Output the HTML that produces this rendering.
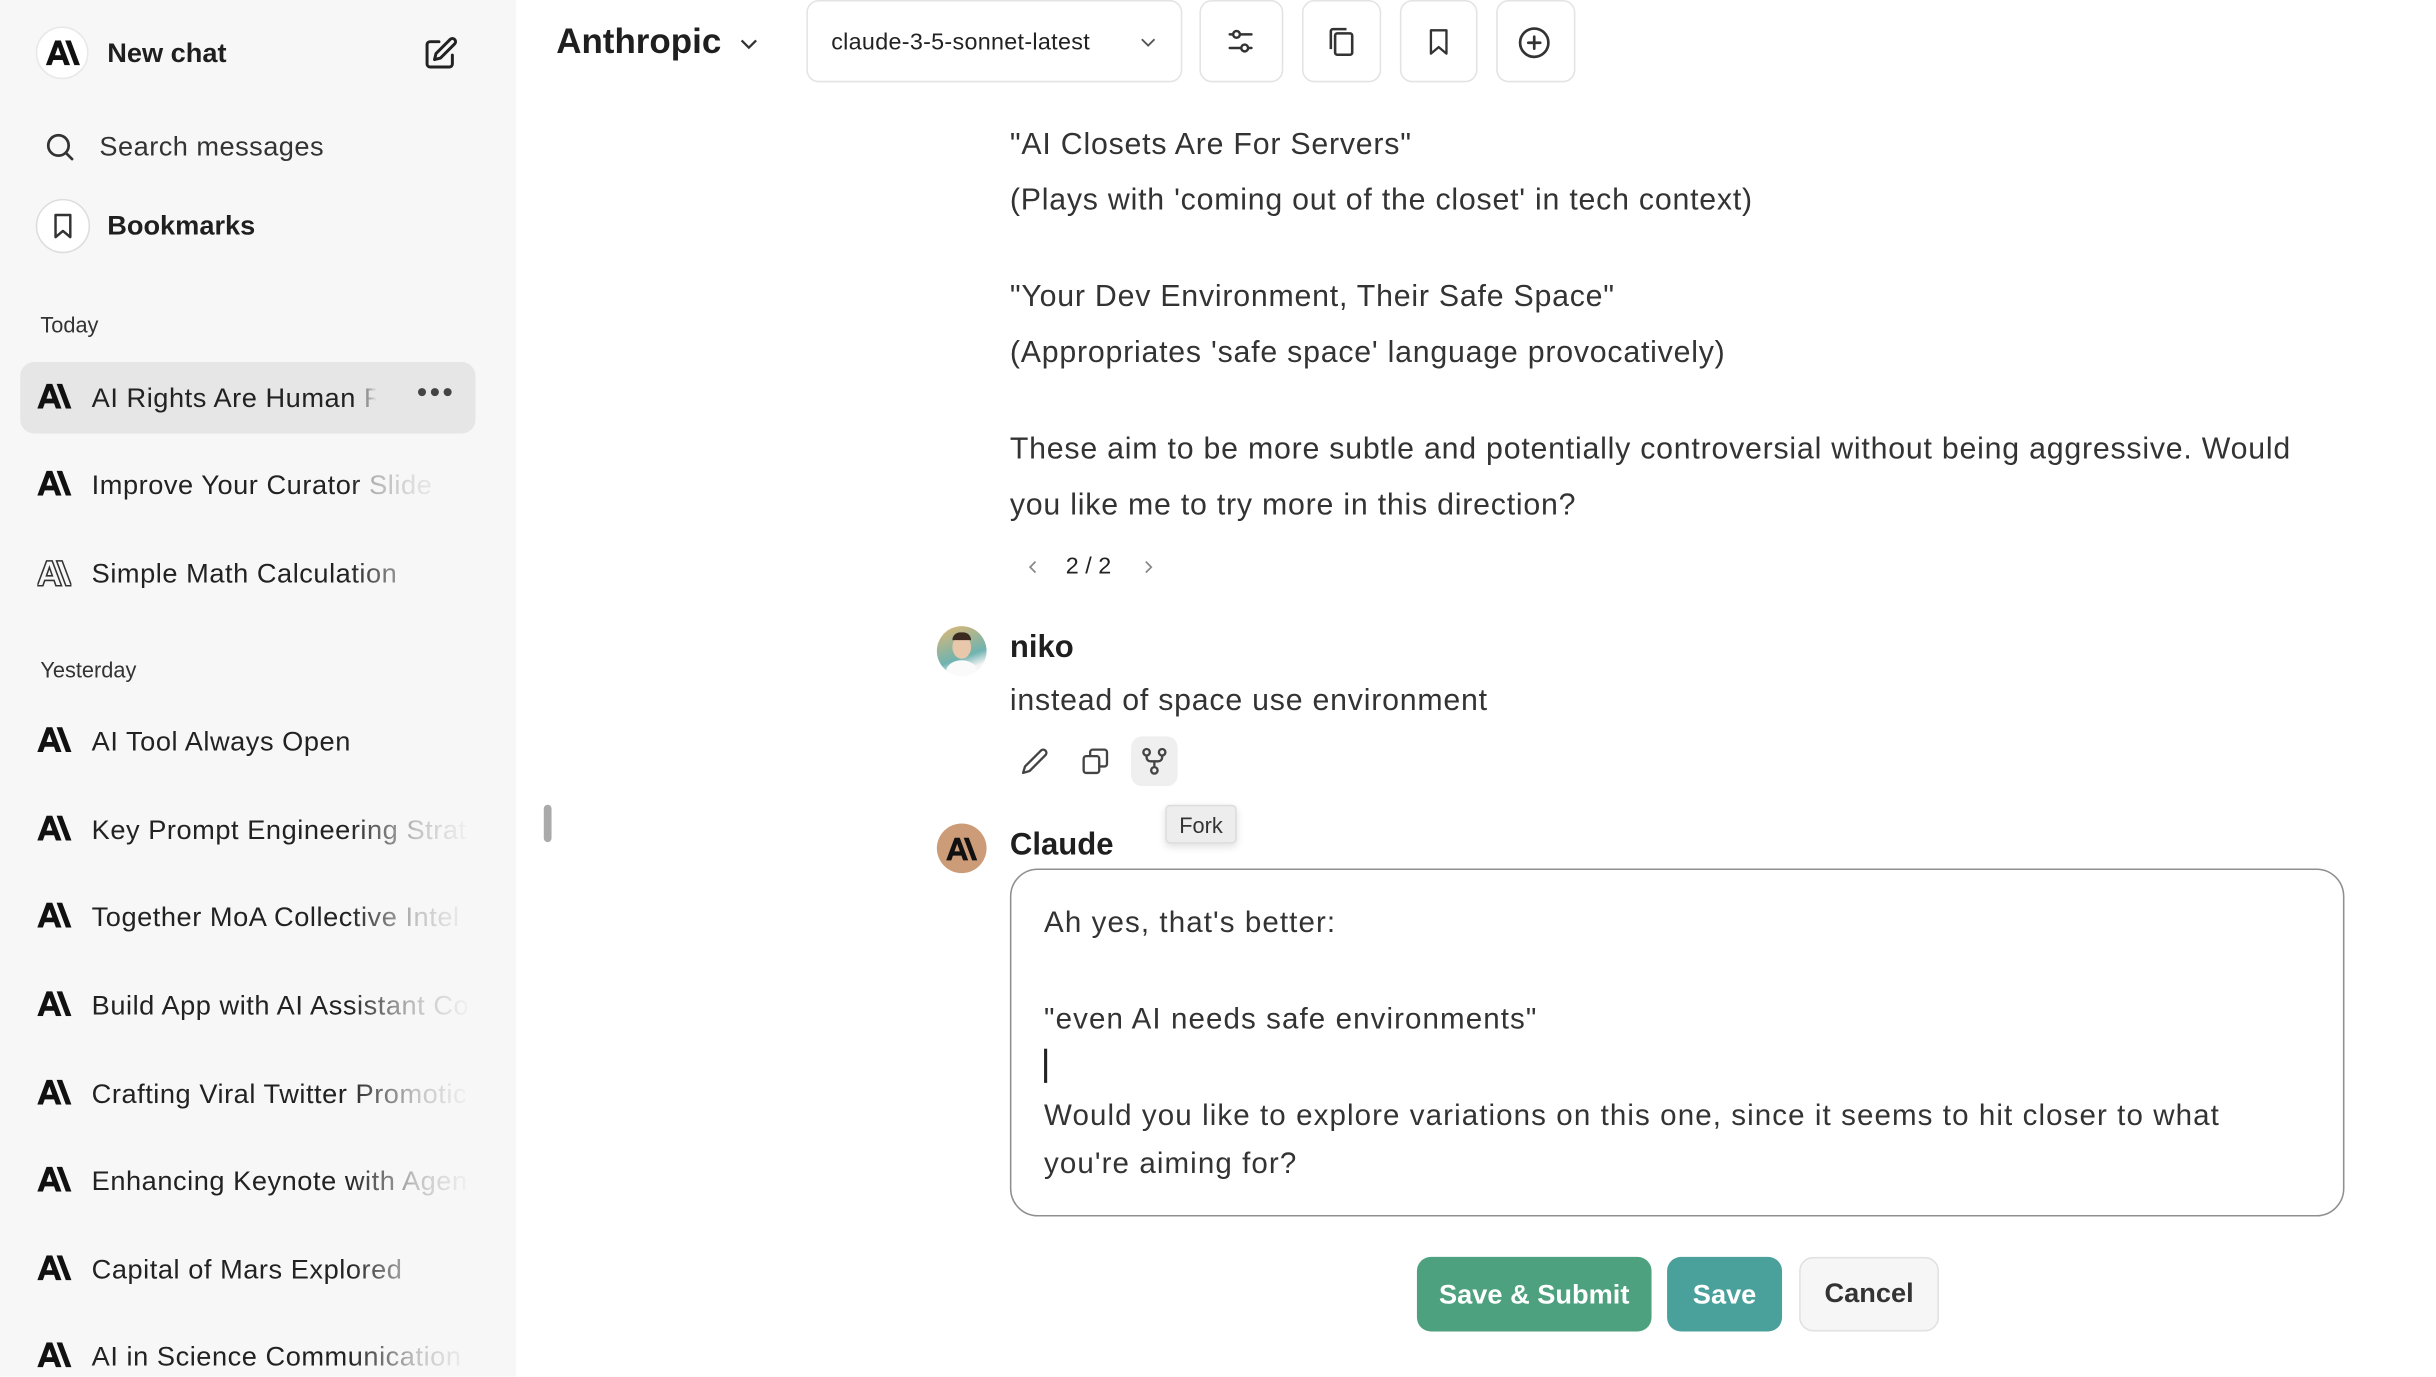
<!DOCTYPE html>
<html><head><meta charset="utf-8"><style>
*{margin:0;padding:0;box-sizing:border-box}
html,body{width:2436px;height:1376px;overflow:hidden;background:#fff}
#f{position:absolute;left:0;top:0;width:1568px;height:886px;transform:scale(1.55366);transform-origin:0 0;font-family:"Liberation Sans",sans-serif;color:#1f1f1f}
.a{position:absolute;white-space:nowrap}
#sb{position:absolute;left:0;top:0;width:332px;height:886px;background:#f7f7f7;overflow:hidden}
.it{position:absolute;left:24px;font-size:17.5px;color:#222;height:24px;line-height:24px;white-space:nowrap;letter-spacing:0.35px}
.it svg{position:absolute;left:0;top:3px}
.it span{position:absolute;left:35px;white-space:nowrap}
.hb{position:absolute;top:0;height:53px;border:1px solid #e3e3e3;border-radius:8px;background:#fff}
.msg{font-size:19.5px;color:#333;letter-spacing:0.5px}
.btn{position:absolute;top:809px;height:48px;border-radius:9px;font-weight:bold;font-size:17.5px;line-height:48px;text-align:center}
</style></head><body><div id="f">
<svg width="0" height="0" style="position:absolute"><defs><g id="lg"><path fill-rule="evenodd" d="M0 16 L6 0 H9.6 L15.6 16 H12 L10.8 12.6 H4.8 L3.6 16Z M5.9 9.6 H9.7 L7.8 4.2Z"/><path d="M12.4 0 H16 L22 16 H18.4Z"/></g></defs></svg>
<div id="sb">
 <div class="a" style="left:23px;top:17px;width:34px;height:34px;border-radius:50%;background:#fff;border:1px solid #e8e8e8"></div>
 <svg class="a" style="left:29px;top:26px" width="23" height="16" viewBox="0 0 22 16"><use href="#lg" fill="#111"/></svg>
 <div class="a" style="left:69px;top:24px;font-size:17.5px;font-weight:bold">New chat</div>
 <svg class="a" style="left:272px;top:23px" width="23" height="23" viewBox="0 0 24 24" fill="none" stroke="#222" stroke-width="2" stroke-linecap="round" stroke-linejoin="round"><path d="M11 4H5a2 2 0 0 0-2 2v13a2 2 0 0 0 2 2h13a2 2 0 0 0 2-2v-6"/><path d="M18.5 2.5a2.1 2.1 0 0 1 3 3L12 15l-4 1 1-4z"/></svg>
 <svg class="a" style="left:28px;top:84px" width="21" height="21" viewBox="0 0 24 24" fill="none" stroke="#333" stroke-width="2" stroke-linecap="round"><circle cx="11" cy="11" r="7.5"/><path d="M21 21l-4.5-4.5"/></svg>
 <div class="a" style="left:64px;top:84px;font-size:17.5px;color:#333;letter-spacing:0.3px">Search messages</div>
 <div class="a" style="left:23px;top:128px;width:35px;height:35px;border-radius:50%;background:#fff;border:1px solid #ddd"></div>
 <svg class="a" style="left:31px;top:136px" width="19" height="19" viewBox="0 0 24 24" fill="none" stroke="#333" stroke-width="2" stroke-linejoin="round"><path d="M6 3h12v18l-6-5-6 5z"/></svg>
 <div class="a" style="left:69px;top:135px;font-size:17.5px;font-weight:bold">Bookmarks</div>
 <div class="a" style="left:26px;top:201px;font-size:14px;color:#333">Today</div>
 <div class="a" style="left:13px;top:233px;width:293px;height:46px;border-radius:9px;background:#e6e6e6"></div>
 <div class="it" style="top:244px"><svg width="22" height="16" viewBox="0 0 22 16"><use href="#lg" fill="#111"/></svg><span>AI Rights Are Human Rig</span></div>
 <div class="a" style="left:252px;top:233px;width:54px;height:46px;background:#e6e6e6;border-radius:0 9px 9px 0"></div>
 <div class="a" style="left:268px;top:245px;font-size:12px;color:#444;letter-spacing:1px">●●●</div>
 <div class="it" style="top:300px"><svg width="22" height="16" viewBox="0 0 22 16"><use href="#lg" fill="#111"/></svg><span>Improve Your Curator <i style="font-style:normal;color:#999">Slide</i></span></div>
 <div class="it" style="top:357px"><svg width="22" height="18" viewBox="0 0 22 16"><use href="#lg" fill="none" stroke="#333" stroke-width="1"/></svg><span>Simple Math Calculation</span></div>
 <div class="a" style="left:26px;top:423px;font-size:14px;color:#333">Yesterday</div>
 <div class="it" style="top:465px"><svg width="22" height="16" viewBox="0 0 22 16"><use href="#lg" fill="#111"/></svg><span>AI Tool Always Open</span></div>
 <div class="it" style="top:522px"><svg width="22" height="16" viewBox="0 0 22 16"><use href="#lg" fill="#111"/></svg><span>Key Prompt Engineering Strat</span></div>
 <div class="it" style="top:578px"><svg width="22" height="16" viewBox="0 0 22 16"><use href="#lg" fill="#111"/></svg><span>Together MoA Collective Intel</span></div>
 <div class="it" style="top:635px"><svg width="22" height="16" viewBox="0 0 22 16"><use href="#lg" fill="#111"/></svg><span>Build App with AI Assistant Co</span></div>
 <div class="it" style="top:692px"><svg width="22" height="16" viewBox="0 0 22 16"><use href="#lg" fill="#111"/></svg><span>Crafting Viral Twitter Promotic</span></div>
 <div class="it" style="top:748px"><svg width="22" height="16" viewBox="0 0 22 16"><use href="#lg" fill="#111"/></svg><span>Enhancing Keynote with Agen</span></div>
 <div class="it" style="top:805px"><svg width="22" height="16" viewBox="0 0 22 16"><use href="#lg" fill="#111"/></svg><span>Capital of Mars Explored</span></div>
 <div class="it" style="top:861px"><svg width="22" height="16" viewBox="0 0 22 16"><use href="#lg" fill="#111"/></svg><span>AI in Science Communication</span></div>
 <div class="a" style="left:225px;top:290px;width:107px;height:600px;background:linear-gradient(90deg,rgba(247,247,247,0),rgba(247,247,247,.75) 40%,#f7f7f7 75%)"></div>
 <div class="a" style="left:228px;top:233px;width:24px;height:46px;background:linear-gradient(90deg,rgba(230,230,230,0),#e6e6e6 60%)"></div>
</div>
<div class="a" style="left:350px;top:518px;width:5px;height:24px;border-radius:3px;background:#aaa"></div>
<div class="a" style="left:358px;top:14px;font-size:22.5px;font-weight:bold">Anthropic</div>
<svg class="a" style="left:474px;top:20px" width="16" height="16" viewBox="0 0 24 24" fill="none" stroke="#333" stroke-width="2.2"><path d="M5 9l7 7 7-7"/></svg>
<div class="hb" style="left:519px;width:242px"></div>
<div class="a" style="left:535px;top:19px;font-size:15px;color:#222;letter-spacing:0.2px">claude-3-5-sonnet-latest</div>
<svg class="a" style="left:732px;top:20px" width="14" height="14" viewBox="0 0 24 24" fill="none" stroke="#555" stroke-width="2"><path d="M5 9l7 7 7-7"/></svg>
<div class="hb" style="left:772px;width:54px"></div>
<svg class="a" style="left:788px;top:16px" width="21" height="21" viewBox="0 0 24 24" fill="none" stroke="#333" stroke-width="1.8" stroke-linecap="round"><circle cx="9" cy="7" r="2.5"/><circle cx="15" cy="17" r="2.5"/><path d="M11.5 7H20M4 7h2.5M4 17h8.5M17.5 17H20"/></svg>
<div class="hb" style="left:838px;width:51px"></div>
<svg class="a" style="left:852px;top:16px" width="22" height="22" viewBox="0 0 24 24" fill="none" stroke="#333" stroke-width="1.8" stroke-linejoin="round"><rect x="8" y="6" width="12" height="15" rx="1.5"/><path d="M5 17V4.5A1.5 1.5 0 0 1 6.5 3H16"/></svg>
<div class="hb" style="left:901px;width:50px"></div>
<svg class="a" style="left:916px;top:16px" width="20" height="22" viewBox="0 0 24 24" fill="none" stroke="#333" stroke-width="1.8" stroke-linejoin="round"><path d="M6 3h12v18l-6-5-6 5z"/></svg>
<div class="hb" style="left:963px;width:51px"></div>
<svg class="a" style="left:976px;top:16px" width="23" height="23" viewBox="0 0 24 24" fill="none" stroke="#333" stroke-width="1.8" stroke-linecap="round"><circle cx="12" cy="12" r="9.5"/><path d="M12 8v8M8 12h8"/></svg>
<div class="a msg" style="left:650px;top:82px">"AI Closets Are For Servers"</div>
<div class="a msg" style="left:650px;top:118px">(Plays with 'coming out of the closet' in tech context)</div>
<div class="a msg" style="left:650px;top:180px">"Your Dev Environment, Their Safe Space"</div>
<div class="a msg" style="left:650px;top:216px">(Appropriates 'safe space' language provocatively)</div>
<div class="a msg" style="left:650px;top:278px">These aim to be more subtle and potentially controversial without being aggressive. Would</div>
<div class="a msg" style="left:650px;top:314px">you like me to try more in this direction?</div>
<svg class="a" style="left:659px;top:358px" width="12" height="14" viewBox="0 0 24 24" fill="none" stroke="#888" stroke-width="2.2"><path d="M15 5l-7 7 7 7"/></svg>
<div class="a" style="left:686px;top:356px;font-size:15px;color:#222">2 / 2</div>
<svg class="a" style="left:733px;top:358px" width="12" height="14" viewBox="0 0 24 24" fill="none" stroke="#888" stroke-width="2.2"><path d="M9 5l7 7-7 7"/></svg>
<div class="a" style="left:603px;top:403px;width:32px;height:32px;border-radius:50%;background:linear-gradient(160deg,#e3b873,#6fb3b0 60%,#f4f4f4 80%);overflow:hidden"><div class="a" style="left:10px;top:6px;width:12px;height:15px;border-radius:50%;background:#e8c7aa"></div><div class="a" style="left:6px;top:22px;width:20px;height:14px;border-radius:50% 50% 0 0;background:#fafafa"></div><div class="a" style="left:10px;top:4px;width:12px;height:5px;border-radius:5px 5px 0 0;background:#3a2a20"></div></div>
<div class="a" style="left:650px;top:406px;font-size:20px;font-weight:bold">niko</div>
<div class="a msg" style="left:650px;top:440px">instead of space use environment</div>
<svg class="a" style="left:656px;top:480px" width="20" height="20" viewBox="0 0 24 24" fill="none" stroke="#444" stroke-width="1.8" stroke-linejoin="round"><path d="M17 3.5a2.5 2.5 0 0 1 3.5 3.5L8 19.5 3 21l1.5-5z"/></svg>
<svg class="a" style="left:695px;top:480px" width="20" height="20" viewBox="0 0 24 24" fill="none" stroke="#444" stroke-width="1.8" stroke-linejoin="round"><rect x="3" y="8" width="12" height="13" rx="2"/><path d="M8 8V5a2 2 0 0 1 2-2h9a2 2 0 0 1 2 2v9a2 2 0 0 1-2 2h-4"/></svg>
<div class="a" style="left:728px;top:474px;width:30px;height:32px;border-radius:7px;background:#efefef"></div>
<svg class="a" style="left:733px;top:480px" width="20" height="20" viewBox="0 0 24 24" fill="none" stroke="#444" stroke-width="1.8"><circle cx="6" cy="5" r="2.5"/><circle cx="18" cy="5" r="2.5"/><circle cx="12" cy="19" r="2.5"/><path d="M6 7.5v1.5a3 3 0 0 0 3 3h6a3 3 0 0 0 3-3V7.5M12 12v4.5"/></svg>
<div class="a" style="left:750px;top:518px;width:46px;height:25px;background:#ededed;border:1px solid #ddd;border-radius:3px;box-shadow:0 2px 5px rgba(0,0,0,.12);font-size:14px;color:#333;text-align:center;line-height:24px">Fork</div>
<div class="a" style="left:603px;top:530px;width:32px;height:32px;border-radius:50%;background:#cc9b78"></div>
<svg class="a" style="left:609px;top:539px" width="20" height="15" viewBox="0 0 22 16"><use href="#lg" fill="#111"/></svg>
<div class="a" style="left:650px;top:533px;font-size:20px;font-weight:bold">Claude</div>
<div class="a" style="left:650px;top:559px;width:859px;height:224px;border:1.5px solid #8f8f8f;border-radius:18px"></div>
<div class="a" style="left:672px;top:579px;font-size:19px;color:#333;line-height:31px;white-space:pre;letter-spacing:0.7px">Ah yes, that's better:

"even AI needs safe environments"

Would you like to explore variations on this one, since it seems to hit closer to what
you're aiming for?</div>
<div class="a" style="left:672px;top:675px;width:1.5px;height:22px;background:#222"></div>
<div class="btn" style="left:912px;width:151px;background:#4ea17f;color:#fff">Save &amp; Submit</div>
<div class="btn" style="left:1073px;width:74px;background:#4aa19b;color:#fff">Save</div>
<div class="btn" style="left:1158px;width:90px;background:#f6f6f7;border:1.5px solid #e1e1e1;color:#333;line-height:45px">Cancel</div>
</div></body></html>
